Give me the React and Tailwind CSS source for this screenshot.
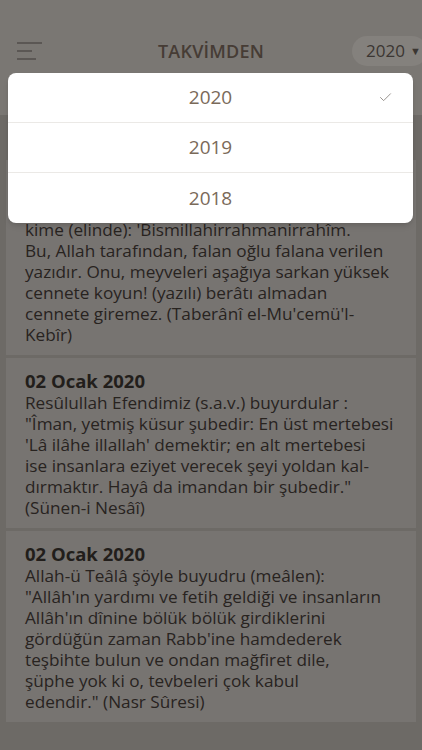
import { Check } from "lucide-react";

const cards = [
  {
    title: "02 Ocak 2020",
    lines: [
      "Resûlullah (s.a.v.) buyurdular: Cennetin",
      "kime (elinde): 'Bismillahirrahmanirrahîm.",
      "Bu, Allah tarafından, falan oğlu falana verilen",
      "yazıdır. Onu, meyveleri aşağıya sarkan yüksek",
      "cennete koyun! (yazılı) berâtı almadan",
      "cennete giremez. (Taberânî el-Mu'cemü'l-",
      "Kebîr)",
    ],
  },
  {
    title: "02 Ocak 2020",
    lines: [
      "Resûlullah Efendimiz (s.a.v.) buyurdular :",
      "\"Îman, yetmiş küsur şubedir: En üst mertebesi",
      "'Lâ ilâhe illallah' demektir; en alt mertebesi",
      "ise insanlara eziyet verecek şeyi yoldan kal-",
      "dırmaktır. Hayâ da imandan bir şubedir.\"",
      "(Sünen-i Nesâî)",
    ],
  },
  {
    title: "02 Ocak 2020",
    lines: [
      "Allah-ü Teâlâ şöyle buyudru (meâlen):",
      "\"Allâh'ın yardımı ve fetih geldiği ve insanların",
      "Allâh'ın dînine bölük bölük girdiklerini",
      "gördüğün zaman Rabb'ine hamdederek",
      "teşbihte bulun ve ondan mağfiret dile,",
      "şüphe yok ki o, tevbeleri çok kabul",
      "edendir.\" (Nasr Sûresi)",
    ],
  },
];

const years = ["2020", "2019", "2018"];

export default function App() {
  return (
    <div
      className="relative w-full h-[750px] overflow-hidden bg-[#6d6a66]"
      style={{ fontFamily: '"Open Sans", "Noto Sans", sans-serif' }}
    >
      {/* header */}
      <div className="h-[115px] bg-[#7a7773] pt-[36px]">
        <div className="flex items-center h-[30px]">
          <div className="w-[130px] pl-[17px] flex flex-col gap-[6px]">
            <div className="w-[25px] h-[2px] bg-[#5b5754]" />
            <div className="w-[15px] h-[2px] bg-[#5b5754]" />
            <div className="w-[19px] h-[2px] bg-[#5b5754]" />
          </div>
          <div className="flex-1 text-center text-[18px] font-semibold text-[#463c35] tracking-[0.2px]">
            TAKVİMDEN
          </div>
          <div className="w-[130px] flex justify-end">
            <div className="h-[30px] w-[75px] -mr-[5px] rounded-full bg-[#84817d] flex items-center pl-[14px] gap-[5px]">
              <span className="text-[17px] text-[#3b3632]">2020</span>
              <span className="text-[11px] text-[#3b3632]">▼</span>
            </div>
          </div>
        </div>
      </div>

      <div className="h-[45px]" />

      {/* cards */}
      <div className="px-[6px] flex flex-col gap-[3px]">
        {cards.map((c, i) => (
          <div
            key={i}
            className={`bg-[#777471] pl-[19px] pr-[6px] pb-[10px] ${i === 0 ? "pt-[15px]" : "pt-[11px]"}`}
          >
            <div className="text-[18.5px] font-bold text-[#221e1b] leading-[23px]">{c.title}</div>
            {c.lines.map((l, j) => (
              <div key={j} className="text-[17.2px] text-[#28231f] leading-[21px] whitespace-nowrap">
                {l}
              </div>
            ))}
          </div>
        ))}
      </div>

      {/* dropdown */}
      <div className="absolute top-[73px] left-[8px] w-[405px] bg-white rounded-[8px] overflow-hidden shadow-md">
        {years.map((y, i) => (
          <div
            key={y}
            className={`relative h-[50px] flex items-center justify-center ${i < 2 ? "border-b border-[#ebe9e6]" : ""}`}
          >
            <span className="text-[19px] font-medium text-[#7a6a59]">{y}</span>
            {i === 0 && (
              <Check
                size={15}
                strokeWidth={1.4}
                className="absolute right-[20px] text-[#8a8580]"
              />
            )}
          </div>
        ))}
      </div>
    </div>
  );
}
